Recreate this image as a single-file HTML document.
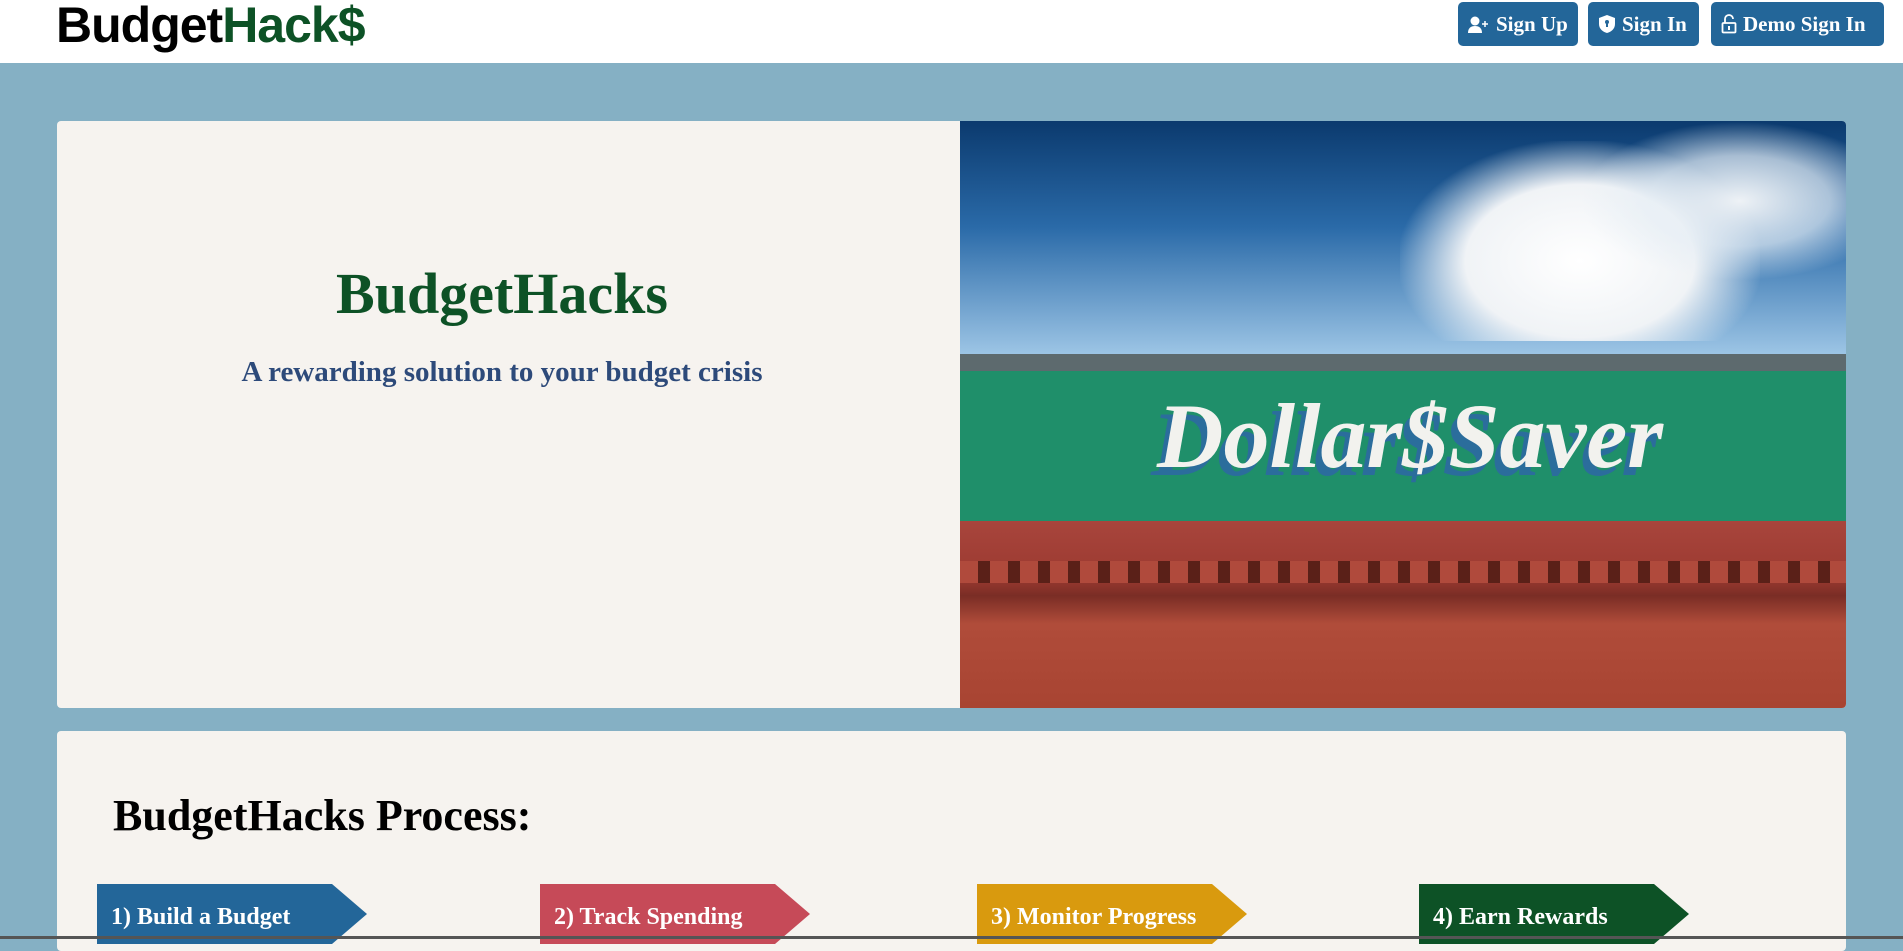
<!DOCTYPE html>
<html><head><meta charset="utf-8"><style>
*{margin:0;padding:0;box-sizing:border-box}
body{width:1903px;height:939px;overflow:hidden;background:#85b0c4;font-family:"Liberation Serif",serif;position:relative}
.hdr{position:absolute;left:0;top:0;width:1903px;height:63px;background:#fff}
.logo{position:absolute;left:56px;top:-4px;font-family:"Liberation Sans",sans-serif;font-weight:bold;font-size:50px;letter-spacing:-1px;color:#000}
.logo span{color:#0d5226}
.btn{position:absolute;top:2px;height:44px;background:#236699;border-radius:5px;color:#fff;font-size:21px;font-weight:bold;line-height:44px;padding-left:10px;white-space:nowrap}
.btn svg{vertical-align:-3px;margin-right:6px}
.card{position:absolute;background:#f6f3ef;border-radius:4px}
.img{position:absolute;left:960px;top:121px;width:886px;height:587px;border-radius:0 4px 4px 0;overflow:hidden}
.arrow{position:absolute;top:884px;height:60px;color:#fff;font-weight:bold;font-size:24px;padding:20px 0 0 14px;clip-path:polygon(0 0,235px 0,270px 50%,235px 100%,0 100%)}
</style></head><body>
<div class="hdr">
<div class="logo">Budget<span>Hack$</span></div>
<div class="btn" style="left:1458px;width:120px"><svg width="22" height="18" viewBox="0 0 22 18"><circle cx="7" cy="5" r="4.5" fill="#fff"/><path d="M0 17c0-5 3-7 7-7s7 2 7 7z" fill="#fff"/><path d="M17 5v6M14 8h6" stroke="#fff" stroke-width="1.5"/></svg>Sign Up</div>
<div class="btn" style="left:1588px;width:111px"><svg width="18" height="20" viewBox="0 0 18 20"><path d="M9 1l8 3v6c0 5-4 8-8 9-4-1-8-4-8-9V4z" fill="#fff"/><circle cx="9" cy="8" r="2" fill="#236699"/><rect x="8" y="9" width="2" height="4" fill="#236699"/></svg>Sign In</div>
<div class="btn" style="left:1711px;width:173px"><svg width="16" height="20" viewBox="0 0 16 20"><path d="M4 9V5a4 4 0 0 1 8 0" stroke="#fff" stroke-width="1.8" fill="none"/><rect x="1.5" y="9" width="13" height="9.5" rx="1" stroke="#fff" stroke-width="1.8" fill="none"/><rect x="7" y="12" width="2" height="4" fill="#fff"/></svg>Demo Sign In</div>
</div>
<div class="card" style="left:57px;top:121px;width:1789px;height:587px"></div>
<div style="position:absolute;left:57px;top:260px;width:890px;text-align:center;color:#0d5226;font-weight:bold;font-size:58px">BudgetHacks</div>
<div style="position:absolute;left:57px;top:356px;width:890px;text-align:center;color:#2d4a7a;font-weight:bold;font-size:29px">A rewarding solution to your budget crisis</div>
<div class="img">
<div style="position:absolute;left:0;top:0;width:886px;height:235px;background:linear-gradient(180deg,#0b3a6e 0%,#2a6aa8 45%,#9ec6e6 100%)"></div>
<div style="position:absolute;left:440px;top:20px;width:360px;height:200px;background:radial-gradient(ellipse at 50% 60%,#fff 0%,#f0f3f6 45%,rgba(220,232,242,0) 72%)"></div>
<div style="position:absolute;left:620px;top:0;width:266px;height:160px;background:radial-gradient(ellipse at 60% 50%,#eef2f6 0%,rgba(230,238,245,.7) 40%,rgba(200,220,240,0) 70%)"></div>
<div style="position:absolute;left:0;top:233px;width:886px;height:17px;background:#5d6a6e"></div>
<div style="position:absolute;left:0;top:250px;width:886px;height:150px;background:#1f8f6a"></div>
<div style="position:absolute;left:0;top:400px;width:886px;height:187px;background:linear-gradient(180deg,#a8453c 0%,#9c3a31 30%,#7a2d25 40%,#b04c3a 55%,#a84432 100%)"></div>
<div style="position:absolute;left:0;top:440px;width:886px;height:22px;background:repeating-linear-gradient(90deg,#b04a3c 0 18px,#5a2018 18px 30px)"></div>
<div style="position:absolute;left:40px;top:262px;width:820px;text-align:center;color:#f2f2ee;font-style:italic;font-weight:bold;font-size:92px;font-family:'Liberation Serif',serif;text-shadow:-6px 8px 0 #2b6d9c">Dollar$Saver</div>
</div>
<div class="card" style="left:57px;top:731px;width:1789px;height:220px"></div>
<div style="position:absolute;left:113px;top:790px;font-weight:bold;font-size:44px;color:#000">BudgetHacks Process:</div>
<div class="arrow" style="left:97px;width:270px;background:#236699">1) Build a Budget</div>
<div class="arrow" style="left:540px;width:270px;background:#c64a58">2) Track Spending</div>
<div class="arrow" style="left:977px;width:270px;background:#d99a0e">3) Monitor Progress</div>
<div class="arrow" style="left:1419px;width:270px;background:#0d5226">4) Earn Rewards</div>
<div style="position:absolute;left:0;top:936px;width:1903px;height:3px;background:#555"></div>
</body></html>
